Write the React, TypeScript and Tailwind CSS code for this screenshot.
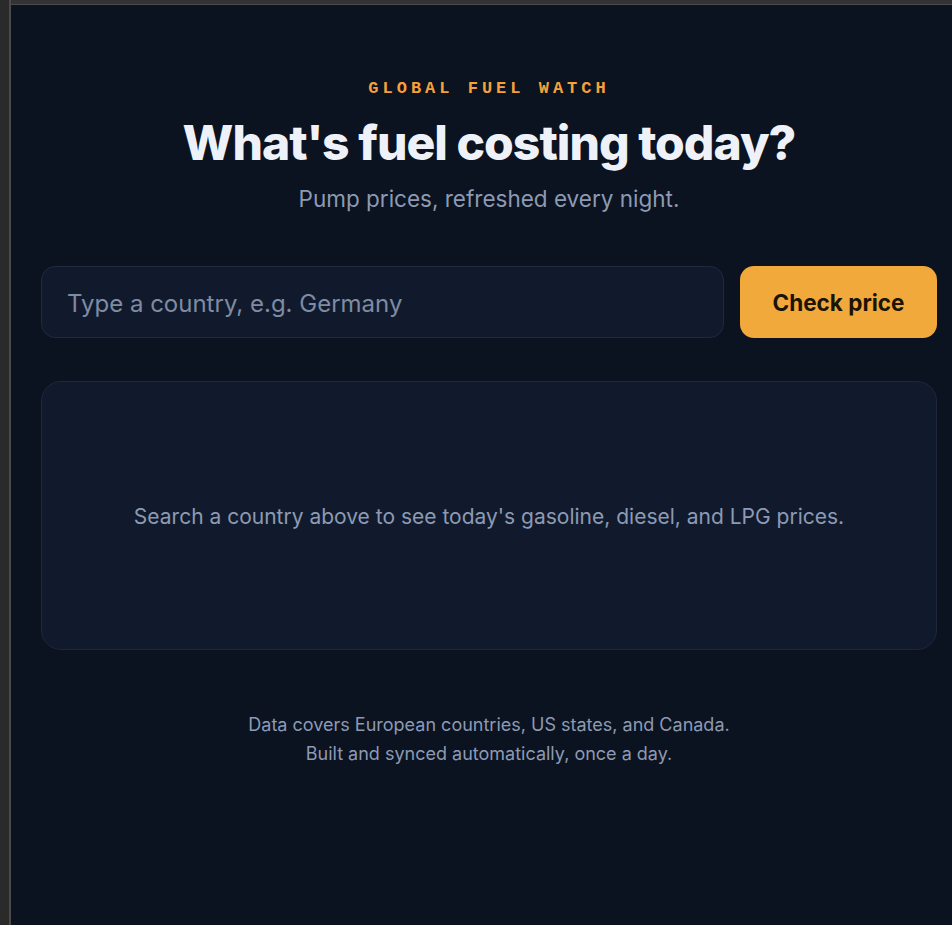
import React from "react";

export default function App() {
  return (
    <div className="flex min-h-[925px] w-full bg-[#2b2b2b]" style={{ fontFamily: "Inter, 'Noto Sans', sans-serif" }}>
      <div className="w-[9px] shrink-0 bg-[#2a2a2a]" />
      <div className="w-[2px] shrink-0 bg-[#4a4a4a]" />
      <div className="flex min-w-0 flex-1 flex-col">
        <div className="h-[4px] bg-[#333333]" />
        <div className="h-[1px] bg-[#4a4a4a]" />
        <main className="flex-1 bg-[#0b1220] pl-[30px] pr-[15px] pt-[72px]">
          <div className="mx-auto flex w-[896px] flex-col items-center">
            <p
              className="text-[17px] font-bold uppercase leading-6 tracking-[0.235em] text-[#f5a13a]"
              style={{ fontFamily: "'Liberation Mono', 'DejaVu Sans Mono', monospace" }}
            >
              Global Fuel Watch
            </p>
            <h1 className="mt-[18px] text-[48px] font-extrabold leading-[48px] tracking-[-0.02em] text-[#eef2f8]">
              What's fuel costing today?
            </h1>
            <p className="mt-[17px] text-[22.5px] leading-[30px] text-[#8d9ab3]">
              Pump prices, refreshed every night.
            </p>
            <div className="mt-[52px] flex w-full gap-4">
              <div className="flex h-[72px] flex-1 items-center rounded-[14px] border border-[#1f2a3e] bg-[#111a2c] px-[25px] pt-[3px]">
                <span className="text-[24px] text-[#7e8ba3]">Type a country, e.g. Germany</span>
              </div>
              <button className="h-[72px] w-[197px] rounded-[14px] bg-[#f2a93b] pt-[2px] text-[22.5px] font-bold text-[#1a1306]">
                Check price
              </button>
            </div>
            <div className="mt-[43px] flex h-[269px] w-full items-center justify-center rounded-[20px] border border-[#1e283b] bg-[#111a2c]">
              <p className="pt-[3px] text-[21px] text-[#8d9ab3]">
                Search a country above to see today's gasoline, diesel, and LPG prices.
              </p>
            </div>
            <div className="mt-[60px] text-center text-[18px] leading-[29px] text-[#8d9ab3]">
              <p>Data covers European countries, US states, and Canada.</p>
              <p>Built and synced automatically, once a day.</p>
            </div>
          </div>
        </main>
      </div>
    </div>
  );
}
